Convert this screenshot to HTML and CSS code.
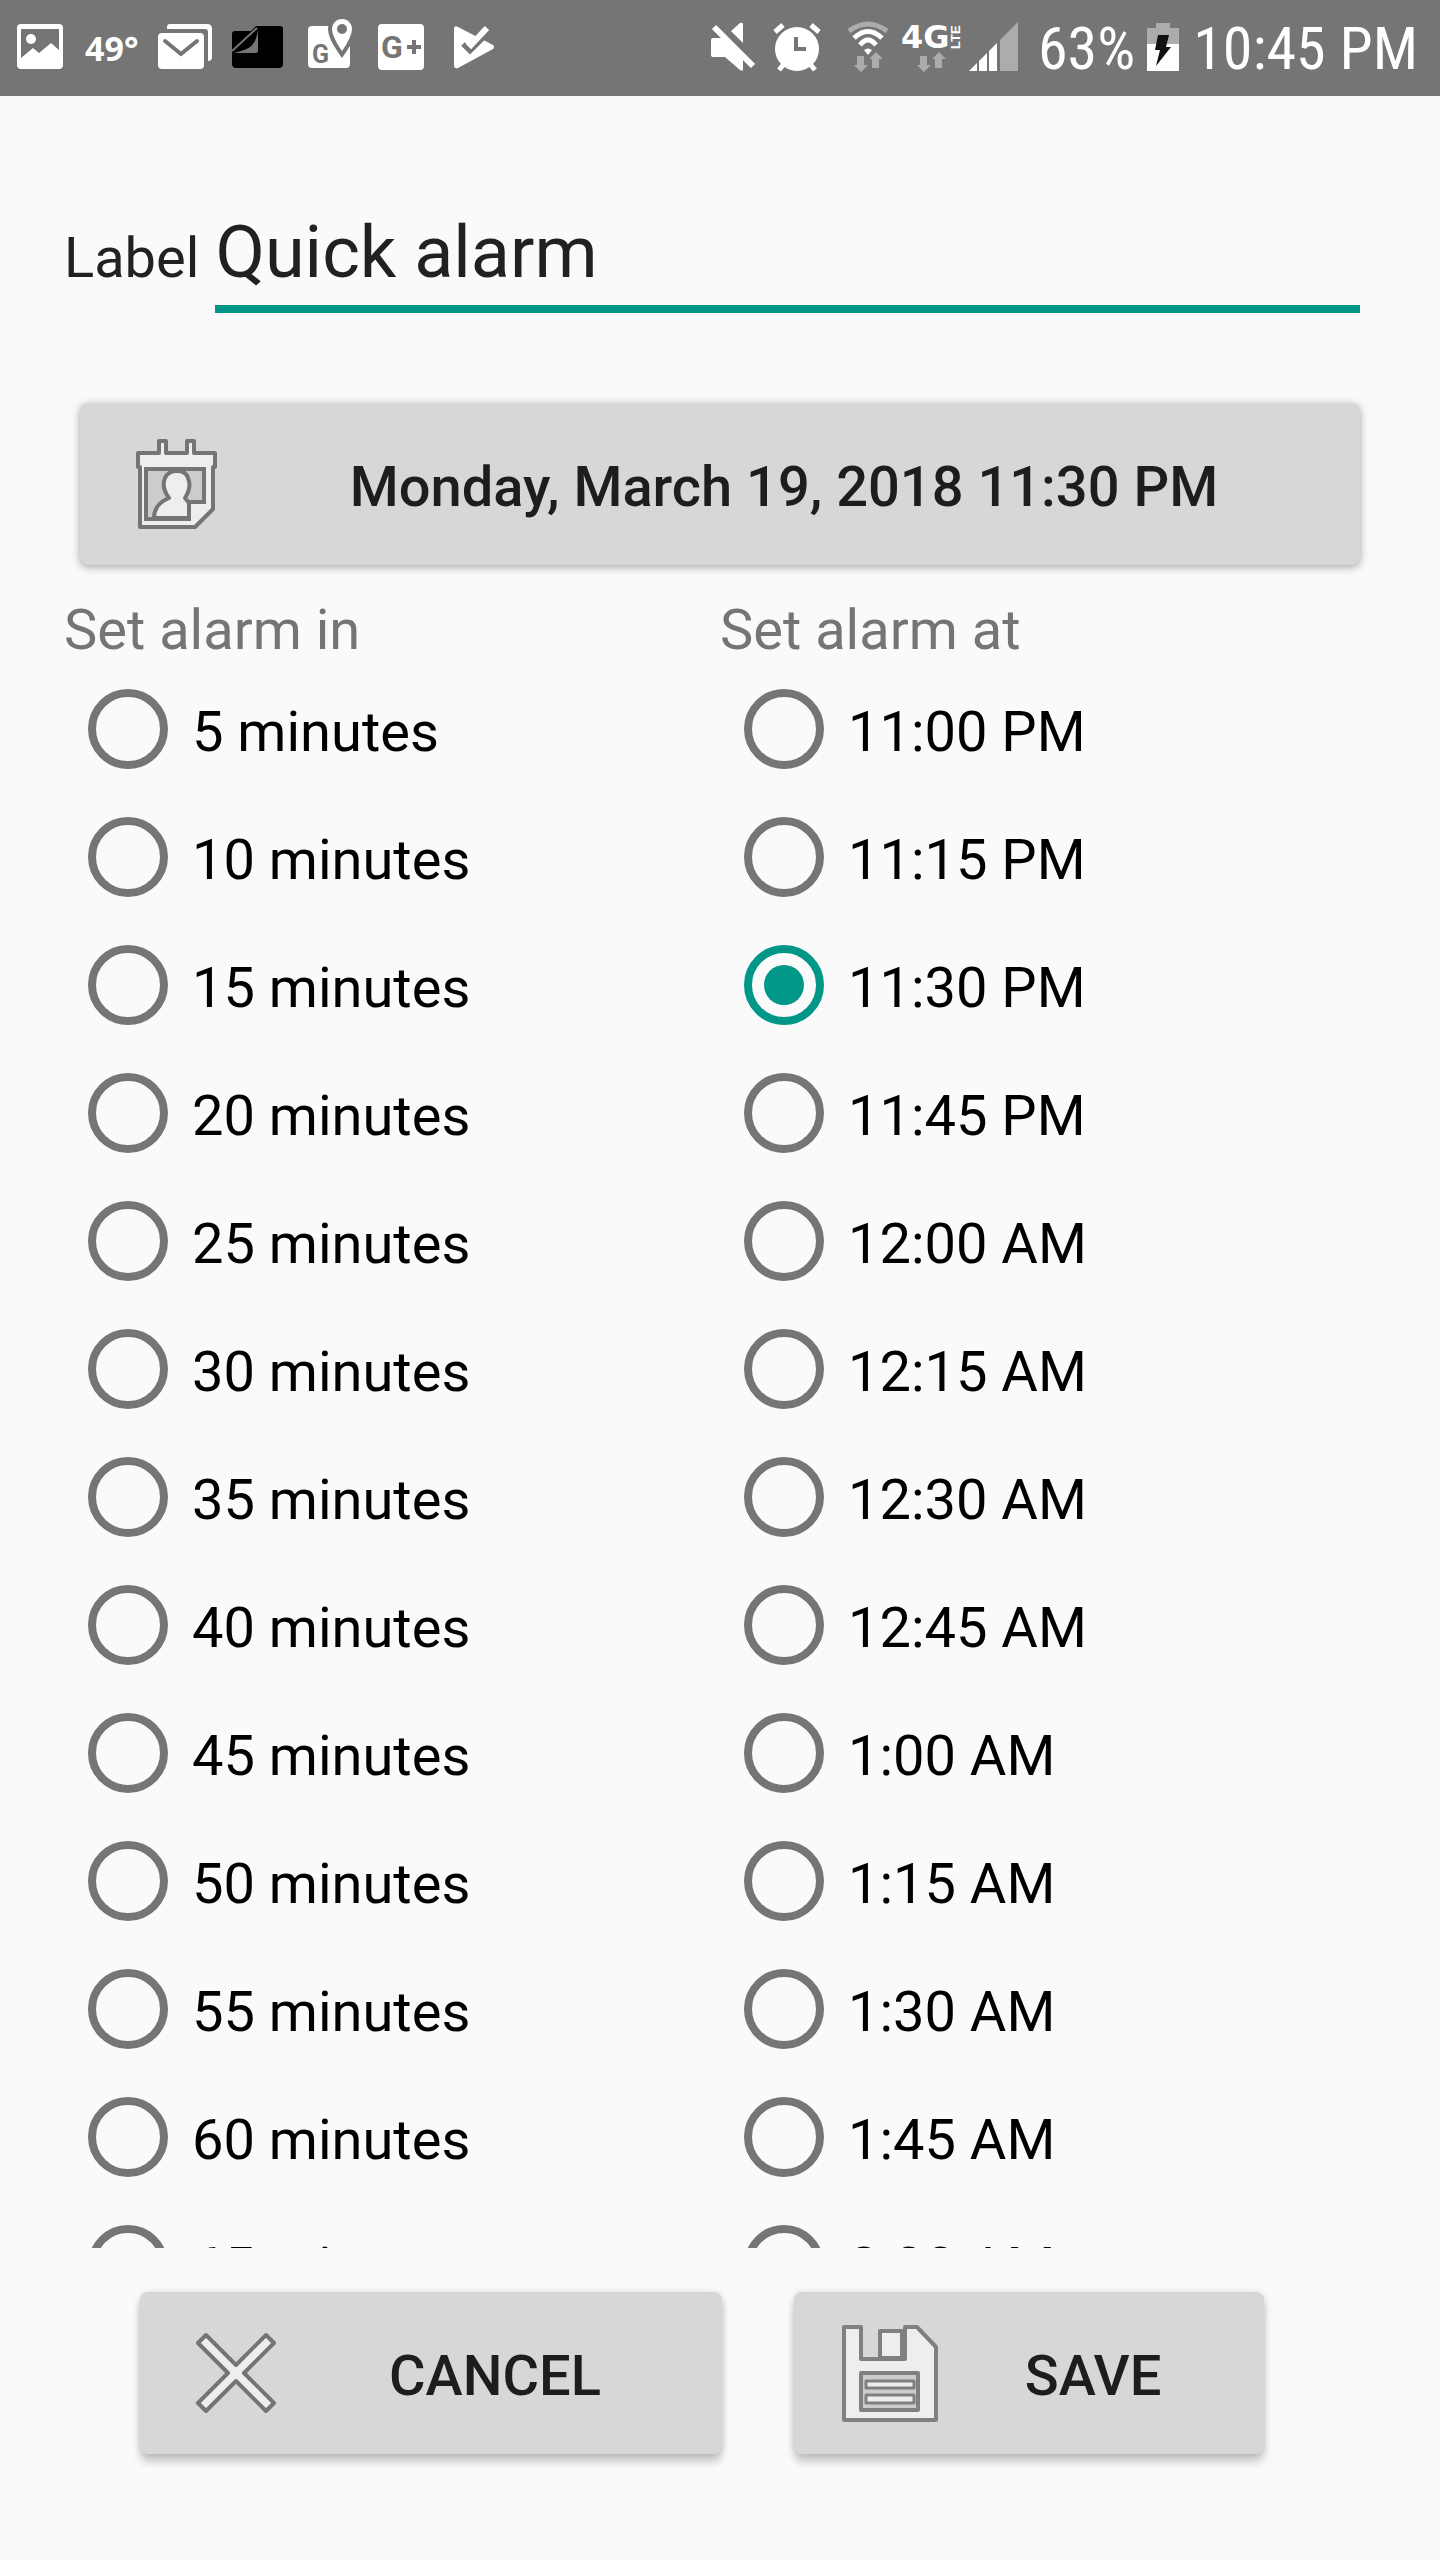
FILE: index.html
```html
<!DOCTYPE html>
<html lang="en">

<head>
    <meta charset="utf-8">
    <meta name="viewport" content="width=device-width, initial-scale=1">
    <title>Quick alarm</title>
    <link rel="stylesheet" href="styles.css">
</head>

<body>
    <header class="status-bar">
        <div class="status-left">
            <svg width="48" height="64" viewBox="0 -4 48 64">
                <path fill="#fff" fill-rule="evenodd" d="M4 4H42Q46 4 46 8V45Q46 49 42 49H4Q0 49 0 45V8Q0 4 4 4ZM4 9V38L16 28 22 33 34 23 42 30V9Z"/>
                <circle cx="14" cy="19" r="5" fill="#fff"/>
            </svg>
            <span class="temp">49°</span>
            <svg width="54" height="64" viewBox="0 -4 54 64">
                <path fill="#fff" d="M9 9V7q0-3 3-3h37q5 0 5 5v28q0 4-4 4V12q0-3-3-3Z"/>
                <rect x="0" y="13" width="46" height="36" rx="4" fill="#fff"/>
                <path d="M7 21 23 34 39 21" fill="none" stroke="#757575" stroke-width="4" stroke-linecap="round"/>
            </svg>
            <svg width="52" height="64" viewBox="0 -4 52 64">
                <path fill="#000" d="M0 14q0-3 3-3H19L24 6H48q3 0 3 3V44q0 4-4 4H4q-4 0-4-4Z"/>
                <path d="M0 31 25 8" stroke="#757575" stroke-width="2"/>
                <path fill="#757575" d="M26 8Q25 22 18 27Q14 30 2 33L24 33Q26 33 26 31Z"/>
            </svg>
            <svg width="52" height="64" viewBox="0 -4 52 64">
                <rect x="4" y="6" width="42" height="42" rx="4" fill="#fff"/>
                <path fill="#fff" stroke="#757575" stroke-width="8" d="M38-1C32-1 28 4 28 9c0 8 10 22 10 22s10-14 10-22c0-5-4-10-10-10z"/>
                <path fill="#fff" d="M38-1C32-1 28 4 28 9c0 8 10 22 10 22s10-14 10-22c0-5-4-10-10-10z"/>
                <circle cx="38" cy="9" r="5" fill="#757575"/>
                <text class="logo-letter" x="8" y="43" font-size="25">G</text>
            </svg>
            <svg width="52" height="64" viewBox="0 -4 52 64">
                <rect x="2" y="4" width="46" height="46" rx="4" fill="#fff"/>
                <text class="logo-letter" x="5" y="38" font-size="32">G</text>
                <path d="M31 27H45M38 20V34" stroke="#757575" stroke-width="4"/>
            </svg>
            <svg width="52" height="64" viewBox="0 -4 52 64">
                <path fill="#fff" d="M6 9q0-4 4-2L45 25q2 2 0 4L10 48q-4 1-4-3Z"/>
                <path d="M15 24 22 31 42 11" fill="none" stroke="#757575" stroke-width="5"/>
                <path d="M20 22 23 25 39 8" fill="none" stroke="#fff" stroke-width="6"/>
            </svg>
        </div>
        <div class="status-right">
            <svg width="48" height="64" viewBox="0 -4 48 64">
                <path fill="#fff" d="M2 20q0-2 2-2H14L34 38V49q0 3-3 1L16 37H4q-2 0-2-2ZM22 11 31 3q3-1 3 1V23Z"/>
                <path d="M5 7 44 46" stroke="#fff" stroke-width="6"/>
            </svg>
            <svg width="68" height="64" viewBox="-4 -4 68 64">
                <circle cx="28" cy="29" r="22" fill="#fff"/>
                <path d="M6 12 14 5M42 5 50 12M10 50 15 44M46 50 41 44" stroke="#fff" stroke-width="5"/>
                <path d="M27 17V29H37" fill="none" stroke="#757575" stroke-width="4"/>
            </svg>
            <svg width="52" height="64" viewBox="0 -4 52 64">
                <g fill="none" stroke="#fff" stroke-width="5">
                    <path stroke="#acacac" d="M8 11Q27-3 46 11"/>
                    <path d="M13 18Q27 5 41 18"/>
                    <path d="M19 25Q27 15 35 25"/>
                </g>
                <path fill="#fff" d="M23 30Q27 27 31 30L27 35Z"/>
                <path fill="#acacac" d="M16 36h7v9h4l-7 7-7-7h3zM31 48h7v-9h4l-7-7-7 7h3z"/>
            </svg>
            <svg width="60" height="64" viewBox="0 -4 60 64">
                <text class="network" x="0" y="28" font-size="32">4G</text>
                <text class="network-sub" transform="translate(59 29) rotate(-90)" x="0" y="0" font-size="13">LTE</text>
                <path fill="#acacac" d="M19 36h7v9h4l-7 7-7-7h3zM34 48h7v-9h4l-7-7-7 7h3z"/>
            </svg>
            <svg width="61" height="64" viewBox="0 -4 61 64">
                <path fill="#fff" d="M0 51 8 43V51ZM10 51V41L18 33V51ZM20 51V31L28 23V51Z"/>
                <path fill="#acacac" d="M31 51V20L49 2V51Z"/>
            </svg>
            <span class="status-text">63%</span>
            <svg width="42" height="64" viewBox="0 -4 42 64">
                <path fill="#acacac" d="M13 3H27V8H36V24H4V8H13Z"/>
                <path fill="#fff" d="M4 24H36V51H4Z"/>
                <path fill="#111" d="M15 15H26L23 27H28L13 46 17 30H12Z"/>
            </svg>
            <span class="status-text">10:45 PM</span>
        </div>
    </header>

    <form class="alarm-form">
        <div class="label-row">
            <label for="alarm-label">Label</label>
            <input type="text" id="alarm-label" name="label" value="Quick alarm">
        </div>

        <button type="button" class="btn date-btn">
            <svg width="128" height="128" viewBox="0 0 128 128" stroke="#757575" stroke-linejoin="round">
                <path fill="#eee" stroke-width="4" d="M26 33H47V21H54V33H75V21H82V33H103V47H101V89L83 107H28V47H26Z"/>
                <path fill="#ccc" stroke-width="4" stroke-linejoin="miter" d="M34 49H92V82H77V99H34Z"/>
                <path fill="#eee" stroke-width="4" d="M42 98Q42 84 57 78Q49 67 53 58Q56 51 65 51Q74 51 76 58Q80 67 73 78L77 83V98Z"/>
            </svg>
            <span>Monday, March 19, 2018 11:30 PM</span>
        </button>

        <div class="columns">
            <fieldset class="column">
                <legend>Set alarm in</legend>
                <label class="option"><input type="radio" name="alarm" value="5"><span>5 minutes</span></label>
                <label class="option"><input type="radio" name="alarm" value="10"><span>10 minutes</span></label>
                <label class="option"><input type="radio" name="alarm" value="15"><span>15 minutes</span></label>
                <label class="option"><input type="radio" name="alarm" value="20"><span>20 minutes</span></label>
                <label class="option"><input type="radio" name="alarm" value="25"><span>25 minutes</span></label>
                <label class="option"><input type="radio" name="alarm" value="30"><span>30 minutes</span></label>
                <label class="option"><input type="radio" name="alarm" value="35"><span>35 minutes</span></label>
                <label class="option"><input type="radio" name="alarm" value="40"><span>40 minutes</span></label>
                <label class="option"><input type="radio" name="alarm" value="45"><span>45 minutes</span></label>
                <label class="option"><input type="radio" name="alarm" value="50"><span>50 minutes</span></label>
                <label class="option"><input type="radio" name="alarm" value="55"><span>55 minutes</span></label>
                <label class="option"><input type="radio" name="alarm" value="60"><span>60 minutes</span></label>
                <label class="option"><input type="radio" name="alarm" value="65"><span>65 minutes</span></label>
            </fieldset>
            <fieldset class="column">
                <legend>Set alarm at</legend>
                <label class="option"><input type="radio" name="alarm" value="23:00"><span>11:00 PM</span></label>
                <label class="option"><input type="radio" name="alarm" value="23:15"><span>11:15 PM</span></label>
                <label class="option"><input type="radio" name="alarm" value="23:30" checked><span>11:30 PM</span></label>
                <label class="option"><input type="radio" name="alarm" value="23:45"><span>11:45 PM</span></label>
                <label class="option"><input type="radio" name="alarm" value="00:00"><span>12:00 AM</span></label>
                <label class="option"><input type="radio" name="alarm" value="00:15"><span>12:15 AM</span></label>
                <label class="option"><input type="radio" name="alarm" value="00:30"><span>12:30 AM</span></label>
                <label class="option"><input type="radio" name="alarm" value="00:45"><span>12:45 AM</span></label>
                <label class="option"><input type="radio" name="alarm" value="01:00"><span>1:00 AM</span></label>
                <label class="option"><input type="radio" name="alarm" value="01:15"><span>1:15 AM</span></label>
                <label class="option"><input type="radio" name="alarm" value="01:30"><span>1:30 AM</span></label>
                <label class="option"><input type="radio" name="alarm" value="01:45"><span>1:45 AM</span></label>
                <label class="option"><input type="radio" name="alarm" value="02:00"><span>2:00 AM</span></label>
            </fieldset>
        </div>

        <div class="actions">
            <button type="button" class="btn">
                <svg width="128" height="128" viewBox="0 0 128 128">
                    <path fill="#eee" stroke="#757575" stroke-width="4" stroke-linejoin="round" d="M64 56 94 26 102 34 72 64 102 94 94 102 64 72 34 102 26 94 56 64 26 34 34 26Z"/>
                </svg>
                <span>CANCEL</span>
            </button>
            <button type="submit" class="btn">
                <svg width="128" height="128" viewBox="0 0 128 128" fill="#eee" stroke="#808080" stroke-width="4" stroke-linejoin="round">
                    <path d="M18 18H35V50H79V18H91L110 38V111H18Z"/>
                    <path d="M54 22H76V49H54Z"/>
                    <path fill="#ccc" d="M35 64H92V101H35Z"/>
                    <path stroke-width="3" d="M40 72H88V79H40ZM40 86H88V94H40Z"/>
                </svg>
                <span>SAVE</span>
            </button>
        </div>
    </form>
</body>

</html>
```

FILE: styles.css
```css
* {
    box-sizing: border-box;
}

body {
    margin: 0;
    height: 100vh;
    display: flex;
    flex-direction: column;
    background-color: #fafafa;
    color: #212121;
    font-family: Roboto, "Noto Sans", sans-serif;
    font-size: 56px;
    line-height: 64px;
}

/* status bar */
.status-bar {
    display: flex;
    justify-content: space-between;
    align-items: center;
    flex: none;
    height: 96px;
    padding: 0 22px 0 17px;
    background-color: #757575;
    color: #fff;
}

.status-left,
.status-right {
    display: flex;
    align-items: center;
    gap: 20px;
}

.status-right {
    gap: 8px;
}

.status-bar svg {
    display: block;
    flex: none;
    overflow: visible;
}

.temp {
    font-family: "Open Sans", sans-serif;
    font-size: 34px;
    font-weight: 700;
}

.status-text {
    padding-top: 2px;
    font-family: "Roboto Condensed", "Liberation Sans Narrow", Roboto, sans-serif;
    font-size: 60px;
    white-space: nowrap;
}

.logo-letter {
    font-family: Roboto, sans-serif;
    font-weight: 700;
    fill: #757575;
}

.network {
    font-family: "DejaVu Sans", sans-serif;
    font-weight: 700;
    fill: #fff;
}

.network-sub {
    font-family: "Liberation Sans", sans-serif;
    font-weight: 700;
    fill: #fff;
}

/* form */
.alarm-form {
    flex: 1;
    min-height: 0;
    display: flex;
    flex-direction: column;
    padding: 104px 64px 106px;
}

.label-row {
    display: flex;
    align-items: baseline;
    gap: 16px;
    margin-right: 16px;
}

.label-row input {
    flex: 1;
    min-width: 0;
    height: 113px;
    padding: 0;
    border: 0;
    border-bottom: 8px solid #009688;
    outline: none;
    background: none;
    color: #212121;
    font-family: inherit;
    font-size: 72px;
}

.btn {
    display: flex;
    align-items: center;
    height: 162px;
    padding: 0 32px;
    border: 0;
    border-radius: 8px;
    background-color: #d6d7d7;
    box-shadow: 0 2px 8px rgba(0, 0, 0, 0.35);
    color: #1c1d1d;
    font-family: inherit;
    font-size: 56px;
    font-weight: 500;
    line-height: 64px;
    cursor: pointer;
}

.btn svg {
    flex: none;
}

.btn span {
    flex: 1;
    padding-top: 6px;
    text-align: center;
}

.date-btn {
    flex: none;
    margin: 90px 16px 32px;
}

/* option lists */
.columns {
    flex: 1;
    min-height: 0;
    display: grid;
    grid-template-columns: 1fr 1fr;
    overflow-y: auto;
    scrollbar-width: none;
}

.column {
    min-width: 0;
    margin: 0;
    padding: 0;
    border: 0;
}

.column legend {
    height: 68px;
    padding: 0;
    color: #757575;
    line-height: 66px;
}

.option {
    display: flex;
    align-items: center;
    gap: 24px;
    height: 128px;
    padding-left: 24px;
    color: #000;
}

.option span {
    padding-top: 6px;
}

.option input {
    appearance: none;
    flex: none;
    width: 80px;
    height: 80px;
    margin: 0;
    padding: 12px;
    border: 8px solid #757575;
    border-radius: 50%;
}

.option input:checked {
    border-color: #009688;
}

.option input:checked::before {
    content: "";
    display: block;
    height: 40px;
    border-radius: 50%;
    background-color: #009688;
}

/* bottom buttons */
.actions {
    display: grid;
    grid-template-columns: 582fr 470fr;
    gap: 72px;
    padding: 44px 112px 0 76px;
}

.actions .btn {
    box-shadow: 0 8px 8px rgba(0, 0, 0, 0.2), 0 0 6px rgba(0, 0, 0, 0.12);
}
```
